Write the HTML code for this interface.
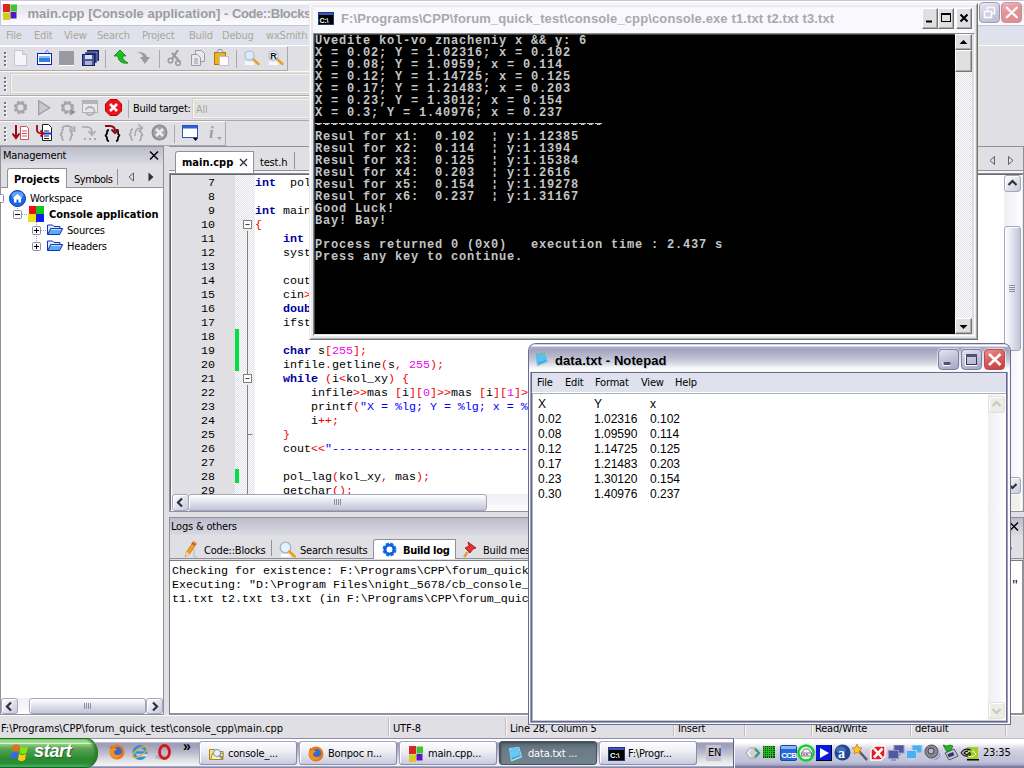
<!DOCTYPE html>
<html><head><meta charset="utf-8"><title>screenshot</title>
<style>
*{box-sizing:border-box;margin:0;padding:0}
html,body{width:1024px;height:768px;overflow:hidden;background:#e0dfe3}
body{font-family:"DejaVu Sans Condensed","Liberation Sans",sans-serif;font-size:11px;color:#000;position:relative;letter-spacing:-.2px}
b,.bd{letter-spacing:0}
.a{position:absolute}
.t{position:absolute;white-space:pre;line-height:14px}
.mono{font-family:"Liberation Mono",monospace;letter-spacing:0}
/* ---------- Code::Blocks main window ---------- */
#cbtitle{left:0;top:0;width:1024px;height:26px;background:linear-gradient(#c8c8da 0,#c8c8da 1px,#ffffff 1px,#ffffff 3.500px,#e5e5ef 5.500px,#ebebf3 12px,#f7f7fb 20px,#fcfcfe 25px,#c4c4d6 25px,#c4c4d6 26px);border-left:1px solid #c8c8da}
#cbmenu{left:0;top:26px;width:1024px;height:20px;background:#dfe1ec;border-bottom:1px solid #fbfbfd}
.tb{background:#e0dfe3;border-top:1px solid #fbfbfd;border-bottom:1px solid #a9a8b0}
.grip{position:absolute;left:4px;top:5px;width:3px;height:16px}
.grip:before{content:"";position:absolute;left:0;top:0;width:2px;height:2px;background:#74747e;box-shadow:1px 1px 0 #fff,0 4px 0 #74747e,1px 5px 0 #fff,0 8px 0 #74747e,1px 9px 0 #fff,0 12px 0 #74747e,1px 13px 0 #fff}
.sep{position:absolute;width:1px;background:#a9a8ae;top:3px;height:18px}
.mi{top:29px;color:#aca899}

.hsb{background:linear-gradient(#eeeef4,#fdfdff)}
.vsb{background:linear-gradient(90deg,#eeeef4,#fdfdff)}
.sbtn{width:17px;height:17px;border:1px solid #a4a5bc;border-radius:3px;background:linear-gradient(135deg,#ffffff,#c6c7dc);box-shadow:inset 1px 1px 0 #fff}
.sbtn svg{margin:-1px}
.arw{fill:none;stroke:#303038;stroke-width:2.2}
.hthumb{height:17px;border:1px solid #a4a5bc;border-radius:3px;background:linear-gradient(#ffffff,#c2c3d8);box-shadow:inset 1px 1px 0 #fff}
.hthumb i{position:absolute;left:50%;top:4px;margin-left:-4px;width:8px;height:6px;background:repeating-linear-gradient(90deg,#8c8ca8 0,#8c8ca8 1px,transparent 1px,transparent 2px)}
.vthumb{width:17px;border:1px solid #a4a5bc;border-radius:3px;background:linear-gradient(90deg,#ffffff,#c2c3d8);box-shadow:inset 1px 1px 0 #fff}
.vthumb i{position:absolute;top:50%;left:4px;margin-top:-4px;height:8px;width:6px;background:repeating-linear-gradient(#8c8ca8 0,#8c8ca8 1px,transparent 1px,transparent 2px)}

.cl{font-size:11.67px;line-height:14px;height:14px}
.k{color:#0000a0}.o{color:#f00000}.n{color:#f000f0}.s{color:#0000ff}
.chk{background:#f0f0f2;background-image:repeating-conic-gradient(#e0dfe3 0 25%,#ffffff 0 50%);background-size:2px 2px}

.lgt{font-size:11.67px;line-height:14px}
.ss{position:absolute;top:718px;width:2px;height:18px;border-left:1px solid #bcbbc2;border-right:1px solid #fbfaf0}

.cbtn{width:16px;height:21px;background:#e0dfe3;border:1px solid #fff;border-right-color:#74746c;border-bottom-color:#74746c;box-shadow:inset -1px -1px 0 #aeaea6}
.csb{width:17px;background:#e0dfe3;border:1px solid #fff;border-right-color:#74746c;border-bottom-color:#74746c;box-shadow:inset -1px -1px 0 #aeaea6}
.chk2{background-image:repeating-conic-gradient(#e0dfe3 0 25%,#ffffff 0 50%);background-size:2px 2px}

.npt{font:12px/15px "Liberation Sans",sans-serif;letter-spacing:0}
.xb{width:21px;height:21px;border-radius:4px;border:1px solid #7c7ca6;background:linear-gradient(160deg,#e6e6f2,#c6c6da 45%,#a6a6c4);box-shadow:0 0 0 1px rgba(255,255,255,.55)}
.xc{background:linear-gradient(160deg,#f09090,#dc5c5c 45%,#c44040);border-color:#b05058}
.dis{background:#eeede5;border-color:#e2e1d6;box-shadow:inset 1px 1px 0 #fff}.dis .arw{stroke:#c8c8c0}

.tbb{width:98px;height:24px;border-radius:3px;border:1px solid #8c8ca8;border-top-color:#a4a4bc;border-left-color:#a4a4bc;background:linear-gradient(#ffffff,#ececf4 45%,#cacade);box-shadow:inset 1px 1px 0 #fff}
.tbb.act{background:linear-gradient(#55636d,#6a7a84 30%,#74848e);border-color:#46545e;box-shadow:inset 1px 1px 2px #3c4a54;color:#fff}
</style></head><body>

<div id="cb" class="a" style="left:0;top:0;width:1024px;height:738px;background:#e0dfe3">
 <div id="cbtitle" class="a"></div>
 <svg class="a" style="left:2px;top:4px" width="17" height="17" viewBox="0 0 17 17"><rect x="1" y="0" width="7" height="8" fill="#d42820"/><rect x="8.500" y="0.500" width="6.500" height="7" fill="#40c430"/><rect x="1" y="8.500" width="7" height="7.500" fill="#d4cc20"/><rect x="8.500" y="8" width="6" height="6.500" fill="#5418c4"/></svg>
 <div class="t" style="left:27.500px;top:6px;font:bold 13px/16px 'Liberation Sans',sans-serif;color:#9c9c9e;letter-spacing:0">main.cpp [Console application] - <span style="letter-spacing:-.4px">Code::Blocks</span></div>
 <div class="a xb" style="left:979px;top:2px;opacity:.75"><svg width="19" height="19"><rect x="7.500" y="4.500" width="7" height="6" fill="none" stroke="#fff" stroke-width="1.600"/><rect x="4.500" y="8.500" width="7" height="6" fill="#c8c8d8" stroke="#fff" stroke-width="1.600"/></svg></div>
 <div class="a xb xc" style="left:1001px;top:2px;opacity:.6"><svg width="19" height="19"><path d="M4 4l11.500 11M15.500 4l-11.500 11" stroke="#fff" stroke-width="2.400"/></svg></div>
 <div id="cbmenu" class="a"></div>
 <div class="t mi" style="left:6px">File</div><div class="t mi" style="left:34px">Edit</div><div class="t mi" style="left:64px">View</div><div class="t mi" style="left:97px">Search</div><div class="t mi" style="left:142px">Project</div><div class="t mi" style="left:189px">Build</div><div class="t mi" style="left:222px">Debug</div><div class="t mi" style="left:266px">wxSmith</div>
 <!-- toolbars -->
 <div class="a tb" style="left:0;top:46px;width:288px;height:25px;border-right:1px solid #a9a8b0"><div class="grip"></div><div class="sep" style="left:105px"></div><div class="sep" style="left:159px"></div><div class="sep" style="left:236px"></div></div>
 <div class="a tb" style="left:0;top:71px;width:720px;height:25px"><div class="grip"></div><div class="a" style="left:10px;top:1px;width:700px;height:21px;border:1px solid #d5d2bd;background:#e0dfe3;box-shadow:inset 0 0 0 1px #f4f4f2"></div></div>
 <div class="a tb" style="left:0;top:96px;width:720px;height:25px"><div class="grip"></div><div class="sep" style="left:128px"></div>
  <div class="t" style="left:133px;top:5px;letter-spacing:-.3px;z-index:2">Build target:</div>
  <div class="a" style="left:192px;top:1px;width:200px;height:21px;border:1px solid #d5d2bd;background:#e0dfe3;box-shadow:inset 0 0 0 1px #f4f4f2"></div><div class="t" style="left:196px;top:6px;color:#aca899">All</div></div>
 <div class="a tb" style="left:0;top:121px;width:226px;height:25px;border-right:1px solid #a9a8b0"><div class="grip"></div><div class="sep" style="left:174px;top:3px"></div></div>
 <svg class="a" style="left:14px;top:50px" width="13" height="16" viewBox="0 0 13 16"><path d="M0.5 .5h8l4 4v11h-12z" fill="#f4f4fc" stroke="#c4c4d4"/><path d="M8.5 .5v4h4" fill="#dcdcec" stroke="#c4c4d4"/></svg>
<svg class="a" style="left:37px;top:50px" width="15" height="16" viewBox="0 0 15 16"><path d="M8 3l2-3 2 3" fill="#d8e8f8" stroke="#7090d0"/><rect x=".5" y="3.5" width="14" height="11" fill="#fff" stroke="#1020b0"/><rect x="2" y="6" width="11" height="6" fill="#3080e0"/><rect x="2" y="6" width="11" height="2" fill="#80c0f8"/></svg>
<svg class="a" style="left:59px;top:51px" width="15" height="15" viewBox="0 0 15 15"><rect width="15" height="14" fill="#9a9aa2"/><rect y="14" width="15" height="1" fill="#fff"/></svg>
<svg class="a" style="left:82px;top:50px" width="17" height="16" viewBox="0 0 17 16"><rect x="5" y="0" width="12" height="11" fill="#182060"/><rect x="3" y="2" width="12" height="11" fill="#283478" stroke="#c8d0f0" stroke-width=".6"/><rect x="0.5" y="4.5" width="12" height="11" fill="#4a5898" stroke="#182060"/><rect x="3" y="5" width="7" height="4" fill="#d8e0f8"/><rect x="3" y="11" width="7" height="4" fill="#a8b0d8"/></svg>
<svg class="a" style="left:114px;top:50px" width="16" height="16" viewBox="0 0 16 16"><path d="M6 0l6 6h-3.5c0 3 2 5 5.5 7c-6 1-10-2-10-7h-4z" fill="#18c020" stroke="#088010" stroke-width=".8"/></svg>
<svg class="a" style="left:137px;top:50px" width="16" height="16" viewBox="0 0 16 16"><path d="M0 2c5 0 9 1 10 5h3l-5 7l-5-7h3c0-2-2-4-6-5z" fill="#9a9aa2"/></svg>
<svg class="a" style="left:167px;top:50px" width="16" height="16" viewBox="0 0 16 16"><path d="M11 0l-6 9M5 3l8 9" stroke="#9a9aa2" stroke-width="2.2" fill="none"/><circle cx="3.5" cy="10.5" r="2.3" fill="none" stroke="#9a9aa2" stroke-width="1.6"/><circle cx="11" cy="13" r="2.3" fill="none" stroke="#9a9aa2" stroke-width="1.6"/></svg>
<svg class="a" style="left:191px;top:50px" width="15" height="16" viewBox="0 0 15 16"><path d="M4.5 .5h6l3 3v8h-9z" fill="#e8e8ee" stroke="#9a9aa2"/><path d="M.5 4.5h6l3 3v8h-9z" fill="#e8e8ee" stroke="#9a9aa2"/><path d="M3 9h4M3 11h4M3 13h4" stroke="#9a9aa2"/></svg>
<svg class="a" style="left:214px;top:49px" width="15" height="17" viewBox="0 0 15 17"><rect x=".5" y="3.5" width="11" height="12" fill="#f0b020" stroke="#b07808"/><path d="M3 3.5c0-4 6-4 6 0z" fill="#e8e8f0" stroke="#8888a0"/><rect x="5.5" y="7.5" width="9" height="9" fill="#fff" stroke="#c0c0d0"/></svg>
<svg class="a" style="left:244px;top:49px" width="18" height="18"><path d="M1 12.500h9v3.500h-9z" fill="#f8f8fc"/><circle cx="5.500" cy="6.500" r="4.600" fill="#d8ecfc" stroke="#a8c0e0" stroke-width="1.300"/><path d="M9.500 10.500l5 4.500" stroke="#e8a020" stroke-width="2.400" stroke-linecap="round"/></svg>
<svg class="a" style="left:267px;top:49px" width="18" height="18"><path d="M2 12.500h9v3.500h-9z" fill="#f8f8fc"/><circle cx="6.500" cy="6.500" r="4.600" fill="#f0f6fc" stroke="#a8c0e0" stroke-width="1.300"/><text x="3.200" y="9.800" font-family="Liberation Sans" font-size="9" font-weight="bold" fill="#101010">R</text><path d="M10.500 10.500l5 4.500" stroke="#e8a020" stroke-width="2.400" stroke-linecap="round"/></svg>
<svg class="a" style="left:13px;top:100px" width="16" height="16" viewBox="0 0 16 16"><circle cx="7.5" cy="7.5" r="5" fill="none" stroke="#a4a4aa" stroke-width="3.4" stroke-dasharray="2.6 1.33"/><circle cx="7.5" cy="7.5" r="4.2" fill="none" stroke="#a4a4aa" stroke-width="2"/></svg>
<svg class="a" style="left:38px;top:100px" width="13" height="16" viewBox="0 0 13 16"><path d="M.7 .7v14l11-7z" fill="#c8c8ce" stroke="#9a9aa0" stroke-width="1.2"/></svg>
<svg class="a" style="left:60px;top:100px" width="17" height="17" viewBox="0 0 17 17"><circle cx="7.5" cy="7.5" r="5" fill="none" stroke="#a4a4aa" stroke-width="3.4" stroke-dasharray="2.6 1.33"/><circle cx="7.5" cy="7.5" r="4.2" fill="none" stroke="#a4a4aa" stroke-width="2"/><path d="M10 8v8l6-4z" fill="#8c8c92" stroke="#e0dfe3" stroke-width=".6"/></svg>
<svg class="a" style="left:82px;top:100px" width="16" height="16" viewBox="0 0 16 16"><rect x=".5" y=".5" width="15" height="12" fill="#e8e8ec" stroke="#b0b0b6"/><rect x="1" y="1" width="14" height="3" fill="#b4b4ba"/><path d="M4 10a4 3 0 0 1 8 0M12 10a4 3 0 0 1-8 3" fill="none" stroke="#b0b0b6" stroke-width="1.8"/></svg>
<svg class="a" style="left:105px;top:99px" width="17" height="17" viewBox="0 0 17 17"><path d="M5 .5h7l4.5 4.5v7l-4.5 4.5h-7l-4.5-4.5v-7z" fill="#f01018" stroke="#a80810"/><path d="M5 5l7 7M12 5l-7 7" stroke="#fff" stroke-width="2.6"/></svg>
<svg class="a" style="left:12px;top:125px" width="18" height="16" viewBox="0 0 18 16"><path d="M4 0v12M.5 8.5l3.5 4.5l3.5-4.5" fill="none" stroke="#a00810" stroke-width="2"/><path d="M8.500 1.500h6l2 2v11h-8z" fill="#fff" stroke="#d05058"/><path d="M10 6h5M10 8.5h5M10 11h5" stroke="#d05058"/></svg>
<svg class="a" style="left:35px;top:124px" width="17" height="18" viewBox="0 0 17 18"><path d="M7.500 .5h6l3 3v13h-9z" fill="#fff" stroke="#202020"/><path d="M9 7h5M9 12h5M9 14.500h5" stroke="#202020"/><path d="M9 9.500h8" stroke="#1030e0" stroke-width="2"/><path d="M2 1v5c0 3 2 3.500 6 3.500M5.500 6.500l3 3l-3 3" fill="none" stroke="#a00810" stroke-width="1.8"/></svg>
<svg class="a" style="left:59px;top:125px" width="17" height="16" viewBox="0 0 17 16"><path d="M5 4c-2 0-2 1-2 2.500s0 2.500-2 3c2 .5 2 1.500 2 3s0 2.500 2 2.500M10 4c2 0 2 1 2 2.500s0 2.500 2 3c-2 .5-2 1.500-2 3s0 2.500-2 2.500" fill="none" stroke="#a8a8ae" stroke-width="1.6"/><path d="M3 3c2-3 8-3 11 1M15.500 1v5h-5" fill="none" stroke="#a8a8ae" stroke-width="1.6"/></svg>
<svg class="a" style="left:82px;top:125px" width="16" height="16" viewBox="0 0 16 16"><path d="M0 2h5c4 0 5 2 5 6M6.500 6l3.500 4l3.500-4" fill="none" stroke="#a8a8ae" stroke-width="1.6"/><path d="M2 14h2M7 14h2M12 14h2" stroke="#a8a8ae" stroke-width="2"/></svg>
<svg class="a" style="left:104px;top:124px" width="18" height="18" viewBox="0 0 18 18"><path d="M5 6c-2 0-2 1-2 2.500s0 2.500-2 3c2 .5 2 1.500 2 3s0 2.500 2 2.500M12 6c2 0 2 1 2 2.500s0 2.500 2 3c-2 .5-2 1.500-2 3s0 2.500-2 2.500" fill="none" stroke="#080808" stroke-width="1.8"/><path d="M1 2h5c4 0 5 2 5 5M7.500 5.500l3.500 3.500l3.500-3.500" fill="none" stroke="#900810" stroke-width="2"/></svg>
<svg class="a" style="left:128px;top:124px" width="17" height="18" viewBox="0 0 17 18"><path d="M5 5c-2 0-2 1-2 2.500s0 2.500-2 3c2 .5 2 1.500 2 3s0 2.500 2 2.500M11 7c2 0 2 .5 2 1.500s0 2 2 2.500c-2 .5-2 1.500-2 3s0 2.500-2 2.500" fill="none" stroke="#a8a8ae" stroke-width="1.6"/><path d="M7 12c0-5 1-8 6-8M10.500 .5l4 3.500l-4 3.500" fill="none" stroke="#a8a8ae" stroke-width="1.6"/></svg>
<svg class="a" style="left:151px;top:124px" width="17" height="17" viewBox="0 0 17 17"><circle cx="8.5" cy="8.500" r="8" fill="#8a8a90"/><circle cx="8.5" cy="8.500" r="6.5" fill="#a4a4aa"/><path d="M5 5l7 7M12 5l-7 7" stroke="#ececf0" stroke-width="2.8"/></svg>
<svg class="a" style="left:182px;top:125px" width="17" height="16" viewBox="0 0 17 16"><rect x=".5" y=".5" width="15" height="12" fill="#fff" stroke="#3050c0"/><rect x="1" y="1" width="14" height="2.500" fill="#3060d8"/><path d="M11 13h5l-2.500 3z" fill="#000"/></svg>
<svg class="a" style="left:208px;top:125px" width="16" height="16" viewBox="0 0 16 16"><text x="1" y="13" font-family="Liberation Serif" font-style="italic" font-weight="bold" font-size="17" fill="#a0a0a6">i</text><path d="M9 12h5l-2.500 3z" fill="#a0a0a6"/></svg>
 
<div class="a" style="left:0;top:146px;width:164px;height:569px;background:#e0dfe3;border:1px solid #919197"></div>
<div class="a" style="left:1px;top:147px;width:162px;height:17px;background:linear-gradient(#bcbccb,#dadae3)"></div>
<div class="t" style="left:3px;top:149px">Management</div>
<svg class="a" style="left:149px;top:151px" width="10" height="9"><path d="M1 .5l8 8M9 .5l-8 8" stroke="#000" stroke-width="1.4"/></svg>
<div class="a" style="left:1px;top:187px;width:162px;height:1px;background:#919197"></div>
<div class="a" style="left:7px;top:168px;width:60px;height:20px;background:#fff;border:1px solid #919197;border-bottom:0;border-radius:3px 0 0 0"></div>
<div class="t" style="left:14px;top:173px;font-weight:bold;letter-spacing:0">Projects</div>
<div class="t" style="left:74px;top:173px;letter-spacing:-.5px">Symbols</div>
<div class="a" style="left:117px;top:169px;width:1px;height:16px;background:#919197"></div>
<svg class="a" style="left:128px;top:172px" width="7" height="10"><path d="M5.500 1v8l-4.500-4z" fill="#e0dfe3" stroke="#606068"/></svg>
<svg class="a" style="left:148px;top:172px" width="7" height="10"><path d="M.5 .5v9l5-4.500z" fill="#303034"/></svg>
<div class="a" style="left:1px;top:188px;width:162px;height:510px;background:#fff"></div>
<svg class="a" style="left:0px;top:194px" width="4" height="9"><path d="M0 .5h2.500a1 1 0 0 1 1 1v6a1 1 0 0 1-1 1h-2.500" fill="#fcfcfe" stroke="#8c8ca4"/></svg>
<svg class="a" style="left:17px;top:206px" width="30" height="40"><path d="M.5 0v4M19.500 16v24.500M5 8.500h6M19.500 24.500h-4M24 24.500h6M24 40.500h6" stroke="#9c9cac" stroke-dasharray="1 1" fill="none"/></svg>
<svg class="a" style="left:9px;top:190px" width="17" height="17" viewBox="0 0 17 17"><circle cx="8.500" cy="8.500" r="8" fill="#1868e8" stroke="#0838a8"/><ellipse cx="8.500" cy="5" rx="6" ry="3.500" fill="#70b0ff" opacity=".8"/><path d="M3.500 8.500l5-4.500l5 4.500h-1.500v4h-2.500v-3h-2v3h-2.500v-4z" fill="#fff"/></svg>
<div class="t" style="left:30px;top:192px">Workspace</div>
<svg class="a" style="left:13px;top:210px" width="9" height="9"><rect x=".5" y=".5" width="8" height="8" rx="1" fill="#fcfcfe" stroke="#8c8ca4"/><path d="M2 4.500h5" stroke="#000"/></svg>
<svg class="a" style="left:28px;top:206px" width="16" height="16"><rect x="1" y="0" width="7" height="8" fill="#e81018"/><rect x="8" y="0" width="8" height="8" fill="#10c818"/><rect x="0" y="8" width="8" height="8" fill="#f0e010"/><rect x="8" y="8" width="8" height="8" fill="#1020e8"/></svg>
<div class="t" style="left:49px;top:208px;font-weight:bold;letter-spacing:0">Console application</div>
<svg class="a" style="left:32px;top:226px" width="9" height="9"><rect x=".5" y=".5" width="8" height="8" rx="1" fill="#fcfcfe" stroke="#8c8ca4"/><path d="M2 4.500h5M4.500 2v5" stroke="#000"/></svg>
<svg class="a" style="left:47px;top:224px" width="17" height="12"><path d="M.5 10.500v-9.500h5l1.500 1.500h6v2" fill="#d8ecfc" stroke="#1030c0"/><path d="M.7 10.500l3-6h12l-3 6z" fill="#60a8f0" stroke="#1030c0"/><path d="M4.500 5.500h9.500" stroke="#c8e4fc"/></svg>
<div class="t" style="left:67px;top:224px">Sources</div>
<svg class="a" style="left:32px;top:242px" width="9" height="9"><rect x=".5" y=".5" width="8" height="8" rx="1" fill="#fcfcfe" stroke="#8c8ca4"/><path d="M2 4.500h5M4.500 2v5" stroke="#000"/></svg>
<svg class="a" style="left:47px;top:240px" width="17" height="12"><path d="M.5 10.500v-9.500h5l1.500 1.500h6v2" fill="#d8ecfc" stroke="#1030c0"/><path d="M.7 10.500l3-6h12l-3 6z" fill="#60a8f0" stroke="#1030c0"/><path d="M4.500 5.500h9.500" stroke="#c8e4fc"/></svg>
<div class="t" style="left:67px;top:240px">Headers</div>
<!-- hscroll -->
<div class="a hsb" style="left:1px;top:698px;width:162px;height:16px"></div>
<div class="a sbtn" style="left:1px;top:698px;height:16px"><svg width="17" height="17"><path d="M10 4.500l-4 4l4 4" class="arw"/></svg></div>
<div class="a sbtn" style="left:146px;top:698px;height:16px"><svg width="17" height="17"><path d="M7 4.500l4 4l-4 4" class="arw"/></svg></div>
<div class="a hthumb" style="left:29px;top:698px;width:117px;height:16px"><i></i></div>
<div class="a" style="left:164px;top:146px;width:5px;height:569px;background:#e0dfe3"></div>

 <div class="a" style="left:169px;top:146px;width:855px;height:1px;background:#919197"></div>
<div class="a" style="left:169px;top:170px;width:855px;height:1px;background:#919197"></div><div class="a" style="left:169px;top:171px;width:855px;height:2px;background:#f6f6f9"></div>
<div class="a" style="left:175px;top:151px;width:79px;height:22px;background:#fff;border:1px solid #919197;border-bottom:0;border-radius:3px 0 0 0"></div>
<div class="t" style="left:182px;top:156px;font-weight:bold;letter-spacing:0">main.cpp</div>
<svg class="a" style="left:239px;top:158px" width="9" height="9"><path d="M1 1l7 7M8 1l-7 7" stroke="#303034" stroke-width="1.3"/></svg>
<div class="t" style="left:260px;top:156px">test.h</div>
<div class="a" style="left:294px;top:152px;width:1px;height:17px;background:#919197"></div>
<svg class="a" style="left:988px;top:155px" width="8" height="11"><path d="M6.500 1.500v8l-4.500-4z" fill="#e0dfe3" stroke="#606068"/></svg>
<svg class="a" style="left:1007px;top:155px" width="8" height="11"><path d="M1.500 1.500v8l4.500-4z" fill="#e0dfe3" stroke="#606068"/></svg>
<div class="a" style="left:1023px;top:146px;width:1px;height:27px;background:#919197"></div><div id="ed" class="a" style="left:169px;top:173px;width:855px;height:339px;background:#fff;border:1px solid #919197;border-top-color:#8c8c94;overflow:hidden">
<div class="a" style="left:0;top:0;width:853px;height:337px;border:1px solid #686870;border-right-color:#e8e8ec;border-bottom-color:#e8e8ec"></div>
<div class="a" style="left:2px;top:1px;width:63px;height:319px;background:#e0dfe3"></div>
<div class="a chk" style="left:65px;top:1px;width:20px;height:319px"></div>
<div class="t mono cl" style="left:2px;top:2px;width:43px;text-align:right">7</div>
<div class="t mono cl" style="left:85px;top:2px"><b class="k">int</b>  pol_lag<span class="o">(</span><b class="k">int</b> kol<span class="o">,</span> <b class="k">double</b> mas<span class="o">[][</span><span class="n">3</span><span class="o">]);</span></div>
<div class="t mono cl" style="left:2px;top:16px;width:43px;text-align:right">8</div>
<div class="t mono cl" style="left:2px;top:30px;width:43px;text-align:right">9</div>
<div class="t mono cl" style="left:85px;top:30px"><b class="k">int</b> main<span class="o">(</span><b class="k">int</b> argc<span class="o">,</span> <b class="k">char</b> <span class="o">*</span>argv<span class="o">[])</span></div>
<div class="t mono cl" style="left:2px;top:44px;width:43px;text-align:right">10</div>
<div class="t mono cl" style="left:85px;top:44px"><span class="o">{</span></div>
<div class="t mono cl" style="left:2px;top:58px;width:43px;text-align:right">11</div>
<div class="t mono cl" style="left:85px;top:58px">    <b class="k">int</b> kol_xy<span class="o">,</span> i<span class="o">=</span><span class="n">0</span><span class="o">;</span></div>
<div class="t mono cl" style="left:2px;top:72px;width:43px;text-align:right">12</div>
<div class="t mono cl" style="left:85px;top:72px">    system<span class="o">(</span><span class="s">&quot;cls&quot;</span><span class="o">);</span></div>
<div class="t mono cl" style="left:2px;top:86px;width:43px;text-align:right">13</div>
<div class="t mono cl" style="left:2px;top:100px;width:43px;text-align:right">14</div>
<div class="t mono cl" style="left:85px;top:100px">    cout<span class="o">&lt;&lt;</span><span class="s">&quot;Vvedite kol-vo znacheniy x &amp;&amp; y: &quot;</span><span class="o">;</span></div>
<div class="t mono cl" style="left:2px;top:114px;width:43px;text-align:right">15</div>
<div class="t mono cl" style="left:85px;top:114px">    cin<span class="o">&gt;&gt;</span>kol_xy<span class="o">;</span></div>
<div class="t mono cl" style="left:2px;top:128px;width:43px;text-align:right">16</div>
<div class="t mono cl" style="left:85px;top:128px">    <b class="k">double</b> mas<span class="o">[</span>kol_xy<span class="o">][</span><span class="n">3</span><span class="o">];</span></div>
<div class="t mono cl" style="left:2px;top:142px;width:43px;text-align:right">17</div>
<div class="t mono cl" style="left:85px;top:142px">    ifstream infile<span class="o">(</span><span class="s">&quot;data.txt&quot;</span><span class="o">);</span></div>
<div class="t mono cl" style="left:2px;top:156px;width:43px;text-align:right">18</div>
<div class="t mono cl" style="left:2px;top:170px;width:43px;text-align:right">19</div>
<div class="t mono cl" style="left:85px;top:170px">    <b class="k">char</b> s<span class="o">[</span><span class="n">255</span><span class="o">];</span></div>
<div class="t mono cl" style="left:2px;top:184px;width:43px;text-align:right">20</div>
<div class="t mono cl" style="left:85px;top:184px">    infile<span class="o">.</span>getline<span class="o">(</span>s<span class="o">,</span> <span class="n">255</span><span class="o">);</span></div>
<div class="t mono cl" style="left:2px;top:198px;width:43px;text-align:right">21</div>
<div class="t mono cl" style="left:85px;top:198px">    <b class="k">while</b> <span class="o">(</span>i<span class="o">&lt;</span>kol_xy<span class="o">)</span> <span class="o">{</span></div>
<div class="t mono cl" style="left:2px;top:212px;width:43px;text-align:right">22</div>
<div class="t mono cl" style="left:85px;top:212px">        infile<span class="o">&gt;&gt;</span>mas <span class="o">[</span>i<span class="o">][</span><span class="n">0</span><span class="o">]&gt;&gt;</span>mas <span class="o">[</span>i<span class="o">][</span><span class="n">1</span><span class="o">]&gt;&gt;</span>mas <span class="o">[</span>i<span class="o">][</span><span class="n">2</span><span class="o">];</span></div>
<div class="t mono cl" style="left:2px;top:226px;width:43px;text-align:right">23</div>
<div class="t mono cl" style="left:85px;top:226px">        printf<span class="o">(</span><span class="s">&quot;X = %lg; Y = %lg; x = %lg\n&quot;</span><span class="o">,</span> mas<span class="o">[</span>i<span class="o">][</span><span class="n">0</span><span class="o">],</span></div>
<div class="t mono cl" style="left:2px;top:240px;width:43px;text-align:right">24</div>
<div class="t mono cl" style="left:85px;top:240px">        i<span class="o">++;</span></div>
<div class="t mono cl" style="left:2px;top:254px;width:43px;text-align:right">25</div>
<div class="t mono cl" style="left:85px;top:254px">    <span class="o">}</span></div>
<div class="t mono cl" style="left:2px;top:268px;width:43px;text-align:right">26</div>
<div class="t mono cl" style="left:85px;top:268px">    cout<span class="o">&lt;&lt;</span><span class="s">&quot;------------------------------------------&quot;</span><span class="o">&lt;&lt;</span>endl<span class="o">;</span></div>
<div class="t mono cl" style="left:2px;top:282px;width:43px;text-align:right">27</div>
<div class="t mono cl" style="left:2px;top:296px;width:43px;text-align:right">28</div>
<div class="t mono cl" style="left:85px;top:296px">    pol_lag<span class="o">(</span>kol_xy<span class="o">,</span> mas<span class="o">);</span></div>
<div class="t mono cl" style="left:2px;top:310px;width:43px;text-align:right">29</div>
<div class="t mono cl" style="left:85px;top:310px">    getchar<span class="o">();</span></div>
<div class="a" style="left:65px;top:155px;width:4px;height:42px;background:#00e040"></div>
<div class="a" style="left:65px;top:295px;width:4px;height:14px;background:#00e040"></div>
<svg class="a" style="left:72px;top:46px" width="12" height="280"><path d="M5.500 11v143M5.500 165v115M5.500 214.500h5" stroke="#808080" fill="none"/><rect x="1.500" y=".5" width="8" height="8" fill="#fff" stroke="#808080"/><path d="M3.500 4.500h4" stroke="#404040"/><rect x="1.500" y="154.500" width="8" height="8" fill="#fff" stroke="#808080"/><path d="M3.500 158.500h4" stroke="#404040"/></svg>
<div class="a hsb" style="left:2px;top:320px;width:832px;height:17px"></div>
<div class="a sbtn" style="left:2px;top:320px"><svg width="17" height="17"><path d="M10 4.500l-4 4l4 4" class="arw"/></svg></div>
<div class="a hthumb" style="left:18px;top:320px;width:299px"><i></i></div>
<div class="a sbtn" style="left:817px;top:320px"><svg width="17" height="17"><path d="M7 4.500l4 4l-4 4" class="arw"/></svg></div>
<div class="a vsb" style="left:834px;top:1px;width:17px;height:319px"></div>
<div class="a sbtn" style="left:834px;top:1px"><svg width="17" height="17"><path d="M4.500 10l4-4l4 4" class="arw"/></svg></div>
<div class="a vthumb" style="left:834px;top:52px;height:125px"><i></i></div>
<div class="a sbtn" style="left:834px;top:303px"><svg width="17" height="17"><path d="M4.500 7l4 4l4-4" class="arw"/></svg></div>
<div class="a" style="left:834px;top:320px;width:17px;height:17px;background:#f1f0e8;border:1px solid #fafaf4"></div>
</div>
 
<div class="a" style="left:169px;top:517px;width:855px;height:198px;background:#e0dfe3;border:1px solid #919197"></div>
<div class="a" style="left:170px;top:518px;width:853px;height:17px;background:linear-gradient(#bcbccb,#dadae3)"></div>
<div class="t" style="left:171px;top:520px">Logs &amp; others</div>
<svg class="a" style="left:1009px;top:522px" width="10" height="9"><path d="M1 .5l8 8M9 .5l-8 8" stroke="#000" stroke-width="1.4"/></svg>
<div class="a" style="left:170px;top:558px;width:853px;height:1px;background:#919197"></div>
<svg class="a" style="left:183px;top:541px" width="16" height="17"><path d="M2 16l1.500-5l7-10.500l3 2l-7 10.500z" fill="#f0a020" stroke="#c07010" stroke-width=".7"/><path d="M2 16l1.500-5l3 2z" fill="#f8e0b0"/><path d="M9 2l3 2" stroke="#e04040" stroke-width="1.600"/><path d="M11 8v8h3" stroke="#b8b8c0" fill="none"/></svg>
<div class="t" style="left:204px;top:544px">Code::Blocks</div>
<div class="a" style="left:271px;top:540px;width:1px;height:16px;background:#919197"></div>
<svg class="a" style="left:279px;top:541px" width="17" height="17"><path d="M2 13h9v3h-9z" fill="#fff"/><circle cx="6.500" cy="6.500" r="5.300" fill="#e4f2fc" stroke="#a0b4d0" stroke-width="1.300"/><path d="M10.500 10.500l5 5" stroke="#e8a020" stroke-width="2.800" stroke-linecap="round"/></svg>
<div class="t" style="left:300px;top:544px">Search results</div>
<div class="a" style="left:373px;top:539px;width:83px;height:20px;background:#fff;border:1px solid #919197;border-bottom:0;border-radius:3px 0 0 0"></div>
<svg class="a" style="left:381px;top:541px" width="17" height="17"><circle cx="8.500" cy="8.500" r="5" fill="none" stroke="#1878e8" stroke-width="4" stroke-dasharray="2.800 1.130"/><circle cx="8.500" cy="8.500" r="4.500" fill="none" stroke="#1060d8" stroke-width="2.600"/></svg>
<div class="t" style="left:403px;top:544px;font-weight:bold;letter-spacing:-.3px">Build log</div>
<svg class="a" style="left:462px;top:541px" width="15" height="17"><path d="M3 16l4-6" stroke="#b0b0b8" stroke-width="1.500"/><path d="M6 1l8 6l-3 1l-3 4l-5-5l4-2z" fill="#e83030" stroke="#a01010" stroke-width=".8"/><path d="M2 16l3-5" stroke="#e8a020" stroke-width="2"/></svg>
<div class="t" style="left:483px;top:544px">Build messages</div>
<svg class="a" style="left:1006px;top:543px" width="8" height="11"><path d="M1.500 1.500v8l4.500-4z" fill="#e0dfe3" stroke="#606068"/></svg>
<div class="a" style="left:169px;top:560px;width:854px;height:154px;background:#fff;border:1px solid #919197;border-top-color:#7c7c84;border-left-color:#7c7c84"></div>
<div class="t mono lgt" style="left:172px;top:564px">Checking for existence: F:\Programs\CPP\forum_quick_test\console_cpp\console.exe</div>
<div class="t mono lgt" style="left:172px;top:578px">Executing: "D:\Program Files\night_5678/cb_console_runner.exe" "F:\Programs\CPP\forum_quick_test\console_cpp\console.exe"</div>
<div class="t mono lgt" style="left:172px;top:592px">t1.txt t2.txt t3.txt (in F:\Programs\CPP\forum_quick_test\console_cpp\.)</div>

 
<div class="a" style="left:0;top:715px;width:1024px;height:23px;background:#e0dfe3;border-top:1px solid #fbfbfd"></div>
<div class="t" style="left:1px;top:722px;letter-spacing:0">F:\Programs\CPP\forum_quick_test\console_cpp\main.cpp</div>
<div class="t" style="left:393px;top:722px">UTF-8</div>
<div class="t" style="left:510px;top:722px">Line 28, Column 5</div>
<div class="t" style="left:678px;top:722px">Insert</div>
<div class="t" style="left:815px;top:722px">Read/Write</div>
<div class="t" style="left:915px;top:722px">default</div>
<div class="ss" style="left:388px"></div><div class="ss" style="left:505px"></div><div class="ss" style="left:673px"></div><div class="ss" style="left:744px"></div><div class="ss" style="left:811px"></div><div class="ss" style="left:910px"></div><div class="ss" style="left:1005px"></div>

</div>


<div id="con" class="a" style="left:309px;top:3px;width:669px;height:337px;background:#e8e8f1;border:1px solid #ecebe4;border-right-color:#74746c;border-bottom-color:#74746c">
 <div class="a" style="left:0;top:0;width:667px;height:335px;border:1px solid #fff;border-right-color:#aeaea6;border-bottom-color:#aeaea6"></div>
 <div class="a" style="left:3px;top:3px;width:661px;height:26px;background:#f8f8fd"></div>
 <svg class="a" style="left:8px;top:8px" width="17" height="14"><rect width="16" height="13" fill="#000"/><rect x=".5" y=".5" width="15" height="12" fill="none" stroke="#203878"/><rect x="1" y="1" width="14" height="2" fill="#3858c0"/><text x="1.500" y="10.500" font-family="Liberation Sans" font-weight="bold" font-size="7" fill="#fff">C:\</text></svg>
 <div class="t" style="left:31px;top:7px;font:bold 13px/16px 'Liberation Sans',sans-serif;color:#a9a9ad;letter-spacing:0.12px">F:\Programs\CPP\forum_quick_test\console_cpp\console.exe t1.txt t2.txt t3.txt</div>
 <div class="a cbtn" style="left:612px;top:4px"><svg width="14" height="18"><path d="M3 12.500h6" stroke="#000" stroke-width="2"/></svg></div>
 <div class="a cbtn" style="left:628px;top:4px"><svg width="14" height="18"><rect x="2.500" y="4.500" width="9" height="8" fill="none" stroke="#000"/><path d="M2 5h10" stroke="#000" stroke-width="2"/></svg></div>
 <div class="a cbtn" style="left:646px;top:4px"><svg width="14" height="18"><path d="M3.500 5.500l7 7M10.500 5.500l-7 7" stroke="#000" stroke-width="2"/></svg></div>
 <div class="a" style="left:3px;top:29px;width:662px;height:303px;border:1px solid #8c8c88;border-right-color:#fff;border-bottom-color:#fff;background:#e0dfe3"></div>
 <div class="a" style="left:4px;top:30px;width:641px;height:300px;background:#000;border-top:1px solid #404040;border-left:1px solid #404040"></div>
 <pre class="t mono" style="left:5px;top:31px;font-size:12px;font-weight:bold;letter-spacing:.8px;line-height:12px;color:#c4c4c4">Uvedite kol-vo znacheniy x &amp;&amp; y: 6
X = 0.02; Y = 1.02316; x = 0.102
X = 0.08; Y = 1.0959; x = 0.114
X = 0.12; Y = 1.14725; x = 0.125
X = 0.17; Y = 1.21483; x = 0.203
X = 0.23; Y = 1.3012; x = 0.154
X = 0.3; Y = 1.40976; x = 0.237
------------------------------------
Resul for x1:  0.102  <span style="display:inline-block;transform:scaleY(.68)">¦</span> y:1.12385
Resul for x2:  0.114  <span style="display:inline-block;transform:scaleY(.68)">¦</span> y:1.1394
Resul for x3:  0.125  <span style="display:inline-block;transform:scaleY(.68)">¦</span> y:1.15384
Resul for x4:  0.203  <span style="display:inline-block;transform:scaleY(.68)">¦</span> y:1.2616
Resul for x5:  0.154  <span style="display:inline-block;transform:scaleY(.68)">¦</span> y:1.19278
Resul for x6:  0.237  <span style="display:inline-block;transform:scaleY(.68)">¦</span> y:1.31167
Good Luck!
Bay! Bay!

Process returned 0 (0x0)   execution time : 2.437 s
Press any key to continue.</pre>
 <div class="a" style="left:5px;top:119px;width:288px;height:1px;background:repeating-linear-gradient(90deg,#c4c4c4 0,#c4c4c4 7px,#000 7px,#000 8px)"></div>
 <div class="a chk2" style="left:645px;top:30px;width:17px;height:300px"></div>
 <div class="a csb" style="left:645px;top:30px;height:16px"><svg width="15" height="15"><path d="M3.500 9h8l-4-4z" fill="#000"/></svg></div>
 <div class="a csb" style="left:645px;top:46px;height:22px"></div>
 <div class="a csb" style="left:645px;top:314px;height:16px"><svg width="15" height="15"><path d="M3.500 6h8l-4 4z" fill="#000"/></svg></div>
</div>


<div id="np" class="a" style="left:528px;top:343px;width:483px;height:382px;background:#6c6c92;border-radius:8px 8px 0 0;overflow:hidden">
 <div class="a" style="left:1px;top:1px;width:481px;height:380px;border-radius:7px 7px 0 0;background:#fcfcff"></div>
 <div class="a" style="left:1px;top:1px;width:481px;height:28px;border-radius:7px 7px 0 0;background:linear-gradient(#c0c0d8 0,#ffffff 1.500px,#d8d8e8 2.500px,#acacc8 3.500px,#a4a4c0 6px,#b8b8cc 12px,#d0d0de 18px,#f0f0f6 23px,#ffffff 26px,#f4f2ee 28px)"></div>
 <svg class="a" style="left:6px;top:8px" width="15" height="16"><path d="M1.500 2.500l9.500-1l2.500 9.500l-10 4z" fill="#38a8e8" stroke="#88c8f0"/><path d="M2 3l8.500-1l1.500 7l-9 3z" fill="#58c0f0"/><path d="M2 2.500l9-1" stroke="#c8a020" stroke-width="1.500" stroke-dasharray="1 1"/><path d="M3.500 14.500l10-4" stroke="#a0d8a0"/></svg>
 <div class="t" style="left:28px;top:11px;font:bold 13px/16px 'Liberation Sans',sans-serif;color:#c8c8d8;letter-spacing:.1px">data.txt - Notepad</div>
 <div class="t" style="left:27px;top:10px;font:bold 13px/16px 'Liberation Sans',sans-serif;color:#000;letter-spacing:.1px">data.txt - Notepad</div>
 <div class="a xb" style="left:410px;top:6px"><svg width="19" height="19"><path d="M3.500 14h8" stroke="#fff" stroke-width="4"/><path d="M4.500 13.500h7" stroke="#50507c" stroke-width="3"/></svg></div>
 <div class="a xb" style="left:433px;top:6px"><svg width="19" height="19"><rect x="3.500" y="5.500" width="11" height="10" fill="none" stroke="#fff"/><rect x="4.500" y="4.500" width="10" height="10" fill="none" stroke="#38385c"/><path d="M4 5.500h11" stroke="#50507c" stroke-width="3"/></svg></div>
 <div class="a xb xc" style="left:456px;top:6px"><svg width="19" height="19"><path d="M4 4l11.500 11M15.500 4l-11.500 11" stroke="#fff" stroke-width="2.600"/></svg></div>
 <div class="a" style="left:2px;top:29px;width:478px;height:351px;background:#9c9cbe"></div><div class="a" style="left:3px;top:29px;width:476px;height:350px;background:#6a6a8a"></div>
 <div class="a" style="left:4px;top:30px;width:474px;height:21px;background:#dfe1ec;border-bottom:1px solid #aab0b8;box-shadow:inset 0 -1px 0 #fff"></div>
 <div class="t" style="left:9px;top:33px">File</div><div class="t" style="left:37px;top:33px">Edit</div><div class="t" style="left:67px;top:33px">Format</div><div class="t" style="left:113px;top:33px">View</div><div class="t" style="left:147px;top:33px">Help</div>
 <div class="a" style="left:4px;top:51px;width:474px;height:327px;background:#fff;border-left:1px solid #b0b8bc;border-bottom:1px solid #c4cccc">
 <div class="t npt" style="left:5px;top:3px">X</div><div class="t npt" style="left:61px;top:3px">Y</div><div class="t npt" style="left:117px;top:3px">x</div><div class="t npt" style="left:5px;top:18px">0.02</div><div class="t npt" style="left:61px;top:18px">1.02316</div><div class="t npt" style="left:117px;top:18px">0.102</div><div class="t npt" style="left:5px;top:33px">0.08</div><div class="t npt" style="left:61px;top:33px">1.09590</div><div class="t npt" style="left:117px;top:33px">0.114</div><div class="t npt" style="left:5px;top:48px">0.12</div><div class="t npt" style="left:61px;top:48px">1.14725</div><div class="t npt" style="left:117px;top:48px">0.125</div><div class="t npt" style="left:5px;top:63px">0.17</div><div class="t npt" style="left:61px;top:63px">1.21483</div><div class="t npt" style="left:117px;top:63px">0.203</div><div class="t npt" style="left:5px;top:78px">0.23</div><div class="t npt" style="left:61px;top:78px">1.30120</div><div class="t npt" style="left:117px;top:78px">0.154</div><div class="t npt" style="left:5px;top:93px">0.30</div><div class="t npt" style="left:61px;top:93px">1.40976</div><div class="t npt" style="left:117px;top:93px">0.237</div>
  <div class="a vsb" style="left:455px;top:0px;width:17px;height:326px"></div>
  <div class="a sbtn dis" style="left:455px;top:2px"><svg width="17" height="17"><path d="M4.500 10l4-4l4 4" class="arw"/></svg></div>
  <div class="a sbtn dis" style="left:455px;top:308px"><svg width="17" height="17"><path d="M4.500 7l4 4l4-4" class="arw"/></svg></div>
 </div>
</div>


<div id="task" class="a" style="left:0;top:738px;width:1024px;height:30px;background:linear-gradient(#8c8cb0 0,#8c8cb0 1px,#ffffff 1px,#ffffff 3.500px,#c0c0d4 4.500px,#a0a0bc 5.500px,#a0a0bc 8px,#acacc4 11px,#bcbccc 15px,#d2d2da 19px,#e4e4e8 23px,#f0f3f0 27px,#f0f3f0 27.500px,#a8a8c4 28.500px,#8888ac 29.500px,#8888ac 30px)">
 <div class="a" style="left:0;top:0;width:98px;height:30px;border-radius:0 12px 12px 0/0 15px 15px 0;background:linear-gradient(#0c6c0c 0,#0c6c0c 1px,#8cd07c 1px,#a0e090 4.500px,#e0f0e0 5px,#e0f0e0 6px,#90cc80 6.500px,#60a858 10px,#4c9c4c 13px,#3c943c 17px,#2a8a2e 21px,#2c9034 26px,#40b070 28px,#40b070 28.800px,#0c5c10 29.200px,#0c5c10 30px);box-shadow:inset -3px 0 3px #2a7a2a"></div>
 <svg class="a" style="left:10px;top:6px" width="19" height="18"><path d="M3 1.500c2-1.500 4-1.500 6.500 0l-1 6c-2.500-1.500-4.500-1.500-6.500 0z" fill="#f06818"/><path d="M10.500 2.500c2.500 1.500 4.500 1.500 7.500 0l-1.500 6.500c-2.500 1.500-4.500 1.500-7 0z" fill="#88e010"/><path d="M1.500 9c2-1.500 4-1.500 6.500 0l-1 6c-2.500-1.500-4.500-1.500-6.500 0z" fill="#3868f0"/><path d="M9 10c2.500 1.500 4.500 1.500 7 0l-1 6c-2.500 1.500-4.500 1.500-7 0z" fill="#f8d010"/></svg>
 <div class="t" style="left:35px;top:3px;font:italic bold 18px/22px 'Liberation Sans',sans-serif;color:#28682a;letter-spacing:-.3px">start</div>
 <div class="t" style="left:34px;top:2px;font:italic bold 18px/22px 'Liberation Sans',sans-serif;color:#fff;letter-spacing:-.3px">start</div>
 <svg class="a" style="left:109px;top:6px" width="16" height="16"><circle cx="8" cy="8" r="7.500" fill="#e87818"/><circle cx="8.500" cy="7.500" r="4.500" fill="#3868c8"/><path d="M2 4c3-1 5 0 6 2c-2 0-3 1-3 3c1 2 4 3 7 1c-1 4-6 6-9 3c-2-2-3-6-1-9z" fill="#f09020"/><path d="M1 5l1.500-3.500l1.500 2.500z" fill="#e06010"/></svg><svg class="a" style="left:132px;top:6px" width="17" height="17"><circle cx="8" cy="8.500" r="6" fill="none" stroke="#2890e8" stroke-width="3"/><path d="M4 8.500h9" stroke="#2890e8" stroke-width="2.400"/><rect x="9" y="10" width="6" height="2.500" fill="#d8d8e8"/><ellipse cx="8" cy="8" rx="8.500" ry="3.500" fill="none" stroke="#e8b020" stroke-width="1.300" transform="rotate(-35 8 8)"/></svg><svg class="a" style="left:155px;top:6px" width="17" height="17"><ellipse cx="6" cy="13" rx="6" ry="2.500" fill="#a0a0b0" opacity=".6"/><ellipse cx="9.500" cy="8" rx="5" ry="6.500" fill="none" stroke="#d81818" stroke-width="2.800"/></svg>
 <div class="t" style="left:183px;top:2px;font:bold 14px/12px 'Liberation Sans',sans-serif">&#187;</div>
 <div class="a tbb" style="left:199px;top:3px"><svg class="a" style="left:8px;top:4px" width="17" height="17"><path d="M1.500 13.500v-10h5l1.500 2h7v8z" fill="#f8e080" stroke="#a88820"/><path d="M2.500 13.500l2-6h11l-2 6z" fill="#fcf0a8" stroke="#a88820"/><circle cx="9" cy="7" r="3.500" fill="#e8f4fc" stroke="#7090c0"/><path d="M11.500 9.500l3 3" stroke="#7090c0" stroke-width="2"/></svg><div class="t" style="left:28px;top:5px">console_...</div></div>
 <div class="a tbb" style="left:299px;top:3px"><svg class="a" style="left:8px;top:4px" width="17" height="17"><circle cx="8" cy="8" r="7.500" fill="#e87818"/><circle cx="8.500" cy="7.500" r="4.500" fill="#3868c8"/><path d="M2 4c3-1 5 0 6 2c-2 0-3 1-3 3c1 2 4 3 7 1c-1 4-6 6-9 3c-2-2-3-6-1-9z" fill="#f09020"/><path d="M1 5l1.500-3.500l1.500 2.500z" fill="#e06010"/></svg><div class="t" style="left:28px;top:5px">Вопрос п...</div></div>
 <div class="a tbb" style="left:399px;top:3px"><svg class="a" style="left:8px;top:4px" width="17" height="17"><rect x="1" y="0" width="7" height="8" fill="#d42820"/><rect x="8.500" y="0.500" width="6.500" height="7" fill="#40c430"/><rect x="1" y="8.500" width="7" height="7.500" fill="#d4cc20"/><rect x="8.500" y="8" width="6" height="6.500" fill="#5418c4"/></svg><div class="t" style="left:28px;top:5px">main.cpp...</div></div>
 <div class="a tbb act" style="left:499px;top:3px"><svg class="a" style="left:8px;top:4px" width="17" height="17"><path d="M1.500 2.500l9.500-1l2.500 9.500l-10 4z" fill="#38a8e8" stroke="#a8d8f8"/><path d="M2 3l8.500-1l1.500 7l-9 3z" fill="#68c8f4"/><path d="M3.500 14.500l10-4" stroke="#c0e8c0"/></svg><div class="t" style="left:28px;top:5px">data.txt ...</div></div>
 <div class="a tbb" style="left:599px;top:3px"><svg class="a" style="left:8px;top:5px" width="17" height="14"><rect width="17" height="14" fill="#000"/><rect x=".5" y=".5" width="16" height="13" fill="none" stroke="#203878"/><rect x="1" y="1" width="15" height="2" fill="#3858c0"/><text x="2" y="11" font-family="Liberation Sans" font-weight="bold" font-size="7.500" fill="#fff">C:\</text></svg><div class="t" style="left:28px;top:5px">F:\Progr...</div></div>
 <div class="a" style="left:706px;top:7px;width:15px;height:16px;background:#c2c2d2"></div>
 <div class="t" style="left:708px;top:8px">EN</div>
 <div class="a" style="left:733px;top:0;width:291px;height:30px;border-left:1px solid #606088;background:linear-gradient(#c0c0cc 0,#c0c0cc 1px,#ffffff 1px,#ffffff 5px,#e8e8f0 8px,#d2d2e2 12px,#c8c8dc 18px,#c0c0d8 24px,#a8a8c4 27px,#7c7ca2 28.500px,#7c7ca2 30px);box-shadow:inset 1px 0 0 #f4f4fa"></div>
</div>
<svg class="a" style="left:745px;top:745px" width="16" height="16"><path d="M1 8l4-5h6l4 5l-4 5h-6z" fill="#d0d0d4" stroke="#a0a0a8"/><path d="M10 4l4 4l-4 4" fill="none" stroke="#20a060" stroke-width="1.800"/><path d="M6 4l-3 4l3 4" fill="none" stroke="#f4f4f4" stroke-width="1.500"/></svg><svg class="a" style="left:763px;top:746px" width="13" height="13"><rect width="12" height="12" fill="#084808"/><path d="M1.500 0v12M3.500 0v12M5.500 0v12M7.500 0v12M9.500 0v12M0 1.500h12M0 3.500h12M0 5.500h12M0 7.500h12M0 9.500h12" stroke="#28c028" stroke-width=".9"/></svg><svg class="a" style="left:780px;top:745px" width="17" height="16"><rect x=".5" y=".5" width="16" height="15" rx="1.500" fill="#2868d8" stroke="#184898"/><rect x="1" y="1" width="15" height="3" fill="#88b8f8"/><text x="1.200" y="12.500" font-family="Liberation Sans" font-weight="bold" font-size="8" fill="#fff" letter-spacing="-.6">CCB</text></svg><svg class="a" style="left:797px;top:744px" width="18" height="18"><circle cx="9" cy="9" r="7.500" fill="#e8f8e8" stroke="#10d030" stroke-width="2.400"/><path d="M4.500 9l3-4h4l3 4v3h-10z" fill="#f0f0f4" stroke="#606068" stroke-width=".8"/><path d="M4.500 9h10" stroke="#606068" stroke-width=".8"/><circle cx="7" cy="10.600" r=".8" fill="#e02020"/><circle cx="10" cy="10.600" r=".8" fill="#2040e0"/></svg><svg class="a" style="left:816px;top:745px" width="16" height="16"><rect width="16" height="16" fill="#000"/><rect width="15" height="15" fill="#0818e0"/><path d="M4 3v10l9-5z" fill="#fff"/></svg><svg class="a" style="left:834px;top:744px" width="17" height="17"><circle cx="8.500" cy="8.500" r="8" fill="#204890"/><ellipse cx="7" cy="6" rx="5" ry="3.500" fill="#5080c8" opacity=".7"/><text x="4" y="13.500" font-family="Liberation Serif" font-weight="bold" font-size="14" fill="#fff">a</text></svg><svg class="a" style="left:852px;top:744px" width="17" height="17"><path d="M6 6l9 10" stroke="#303030" stroke-width="2"/><path d="M6 6l9 10" stroke="#a0a0a0" stroke-width=".7"/><path d="M5 0l1.500 3.500l3.500.5l-2.500 2.500l.5 3.500l-3-1.700l-3 1.700l.5-3.500l-2.500-2.500l3.500-.5z" fill="#f8c820" stroke="#d07010" stroke-width=".7"/></svg><svg class="a" style="left:870px;top:745px" width="16" height="16"><path d="M1 5l4-4h10v10l-4 4h-10z" fill="#e81820" stroke="#fff" stroke-width="1.400"/><path d="M4 3.500l8 9M12.500 3.500l-8.500 9" stroke="#fff" stroke-width="2.600"/></svg><svg class="a" style="left:888px;top:745px" width="17" height="17"><rect x="6" y="0" width="10" height="8" fill="#5058a0" stroke="#9098c8"/><rect x="9" y="9" width="4" height="1.500" fill="#9098c8"/><rect x=".5" y="5.500" width="10" height="8" fill="#5058a0" stroke="#9098c8"/><rect x="3" y="14" width="5" height="2" fill="#9098c8"/></svg><svg class="a" style="left:906px;top:745px" width="17" height="17"><rect x="6" y="0" width="10" height="8" fill="#48b0f0" stroke="#c0d0e8"/><rect x="9" y="9" width="4" height="1.500" fill="#c0d0e8"/><rect x=".5" y="5.500" width="10" height="8" fill="#48b0f0" stroke="#c0d0e8"/><rect x="3" y="14" width="5" height="2" fill="#c0d0e8"/></svg><svg class="a" style="left:924px;top:744px" width="18" height="18"><circle cx="7.500" cy="7.500" r="6.500" fill="#888890" stroke="#505058"/><circle cx="7" cy="7" r="3" fill="#b8b8c0" stroke="#404048"/><path d="M12 14a8 8 0 0 0 4-5M10 16a10 10 0 0 0 7-5" fill="none" stroke="#8888e0" stroke-width=".9"/></svg><svg class="a" style="left:942px;top:744px" width="17" height="18"><path d="M3 9l9-4l4 7l-9 4z" fill="#c8c8d0" stroke="#585860"/><rect x="6" y="9" width="6" height="3.500" fill="#283878" transform="rotate(-22 9 11)"/><path d="M1 1l4 1l3-1l3 1l-2 4l-4 2z" fill="#28b028" stroke="#107010" stroke-width=".7"/></svg><svg class="a" style="left:960px;top:746px" width="19" height="15"><rect x="7" y="1" width="11" height="13" fill="#a0d020"/><rect x="7" y="13" width="12" height="1.500" fill="#000"/><path d="M1 7c3-5 9-5 11-1M1 7c3 4 8 4 10 1M4 7c2-3 5-2 6 0c-2 2-4 2-6 0z" fill="none" stroke="#101010" stroke-width="1.100"/><path d="M8 6c2-2 6-1 8 2c-2 3-5 3-8 2" fill="none" stroke="#fff" stroke-width="1"/></svg>
<div class="t" style="left:983px;top:746px">23:35</div>

</body></html>
